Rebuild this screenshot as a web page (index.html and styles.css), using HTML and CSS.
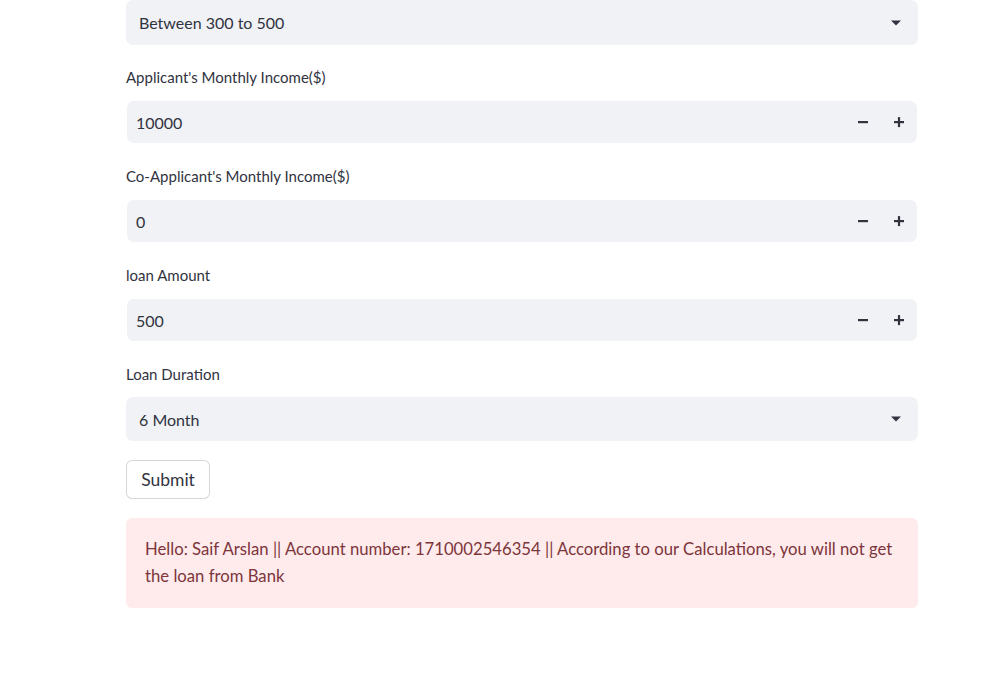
FILE: index.html
```html
<!DOCTYPE html>
<html>
<head>
<meta charset="utf-8">
<link rel="stylesheet" href="styles.css">
</head>
<body>
<main class="main">
  <div class="select first">
    <span class="select-value">Between 300 to 500</span>
    <svg class="caret" width="12" height="8" viewBox="0 0 12 8"><path d="M1 1.5h10L6 6.5z" fill="#31333f"/></svg>
  </div>

  <div class="field f1">
    <label class="label">Applicant's Monthly Income($)</label>
    <div class="number">
      <span class="number-value">10000</span>
      <div class="steps">
        <span class="step"><svg width="12" height="12" viewBox="0 0 12 12"><rect x="1" y="5" width="10" height="2.2" fill="#31333f"/></svg></span>
        <span class="step"><svg width="12" height="12" viewBox="0 0 12 12"><rect x="1" y="5" width="10" height="2.2" fill="#31333f"/><rect x="4.9" y="1.1" width="2.2" height="10" fill="#31333f"/></svg></span>
      </div>
    </div>
  </div>

  <div class="field">
    <label class="label">Co-Applicant's Monthly Income($)</label>
    <div class="number">
      <span class="number-value">0</span>
      <div class="steps">
        <span class="step"><svg width="12" height="12" viewBox="0 0 12 12"><rect x="1" y="5" width="10" height="2.2" fill="#31333f"/></svg></span>
        <span class="step"><svg width="12" height="12" viewBox="0 0 12 12"><rect x="1" y="5" width="10" height="2.2" fill="#31333f"/><rect x="4.9" y="1.1" width="2.2" height="10" fill="#31333f"/></svg></span>
      </div>
    </div>
  </div>

  <div class="field">
    <label class="label">loan Amount</label>
    <div class="number">
      <span class="number-value">500</span>
      <div class="steps">
        <span class="step"><svg width="12" height="12" viewBox="0 0 12 12"><rect x="1" y="5" width="10" height="2.2" fill="#31333f"/></svg></span>
        <span class="step"><svg width="12" height="12" viewBox="0 0 12 12"><rect x="1" y="5" width="10" height="2.2" fill="#31333f"/><rect x="4.9" y="1.1" width="2.2" height="10" fill="#31333f"/></svg></span>
      </div>
    </div>
  </div>

  <div class="field last">
    <label class="label">Loan Duration</label>
    <div class="select">
      <span class="select-value">6 Month</span>
      <svg class="caret" width="12" height="8" viewBox="0 0 12 8"><path d="M1 1.5h10L6 6.5z" fill="#31333f"/></svg>
    </div>
  </div>

  <button class="button">Submit</button>

  <div class="alert">Hello: Saif Arslan || Account number: 1710002546354 || According to our Calculations, you will not get the loan from Bank</div>
</main>
</body>
</html>
```

FILE: styles.css
```css
html, body {
  margin: 0;
  padding: 0;
  background: #ffffff;
}
body {
  font-family: Lato, "Open Sans", "Liberation Sans", sans-serif;
  color: #31333f;
  width: 1007px;
  height: 676px;
  overflow: hidden;
}
.main {
  display: flex;
  flex-direction: column;
  align-items: flex-start;
  width: 792px;
  margin-left: 126px;
}
.select {
  box-sizing: border-box;
  width: 792px;
  height: 44px;
  background: #f0f2f6;
  border-radius: 7px;
  display: flex;
  align-items: center;
  justify-content: space-between;
  padding: 0 16px 0 13px;
}
.select.first {
  height: 45px;
  margin-top: 0;
}
.select-value {
  font-size: 16px;
}
.caret {
  display: block;
}
.field {
  display: flex;
  flex-direction: column;
  width: 792px;
  margin-top: 22px;
}
.field.f1 {
  margin-top: 21px;
}
.label {
  font-size: 15px;
  line-height: 22px;
  height: 22px;
  margin-bottom: 13px;
}
.field.last .label {
  margin-bottom: 12px;
}
.number {
  box-sizing: border-box;
  margin-left: 1px;
  width: 790px;
  height: 42px;
  background: #f0f2f6;
  border-radius: 7px;
  display: flex;
  align-items: center;
  justify-content: space-between;
  padding-left: 9px;
}
.number-value {
  font-size: 16px;
}
.steps {
  display: flex;
  height: 100%;
}
.step {
  width: 36px;
  height: 100%;
  display: flex;
  align-items: center;
  justify-content: center;
}
.button {
  margin-top: 19px;
  box-sizing: border-box;
  width: 84px;
  height: 39px;
  background: #ffffff;
  border: 1px solid rgba(49, 51, 63, 0.2);
  border-radius: 6px;
  font-family: inherit;
  font-size: 17.5px;
  color: #31333f;
  padding: 0;
}
.alert {
  margin-top: 19px;
  box-sizing: border-box;
  width: 792px;
  padding: 18px 18px 18px 19px;
  background: #ffebec;
  color: #7d353b;
  border-radius: 6px;
  font-size: 16.7px;
  line-height: 27px;
}
```
